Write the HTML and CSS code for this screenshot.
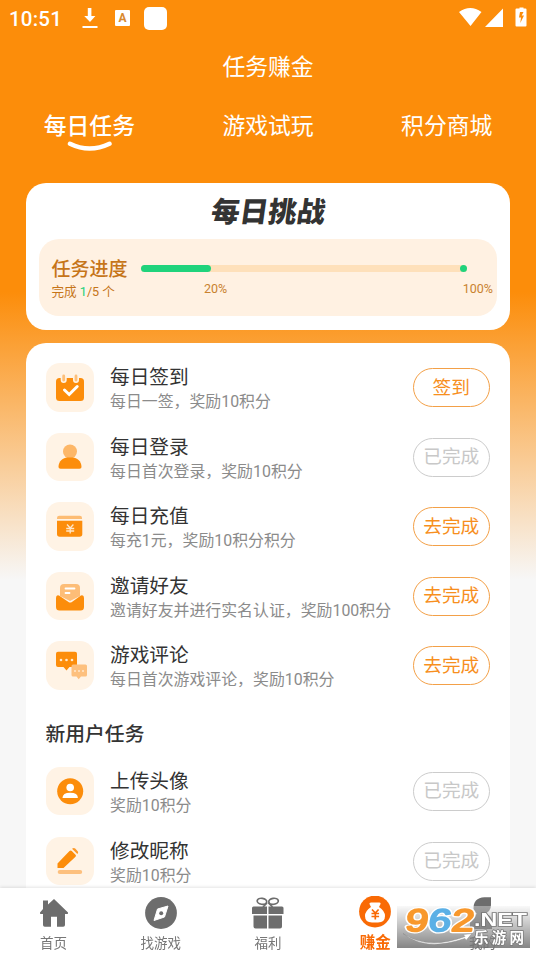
FILE: index.html
```html
<!DOCTYPE html>
<html lang="zh-CN">
<head>
<meta charset="utf-8">
<title>任务赚金</title>
<link rel="stylesheet" href="styles.css">
</head>
<body>
<div class="app">
  <header class="status">
    <span class="clock">10:51</span>
    <svg class="s-download" width="18" height="22" viewBox="0 0 18 22"><path d="M6.800 0h3.600v8h4L9 14 3.200 8h3.600zM1.500 18h15v2h-15z" fill="#fff"/></svg>
    <span class="s-lang">A</span>
    <span class="s-block"></span>
    <svg class="s-signals" width="68" height="22" viewBox="0 0 68 22" fill="#fff"><path d="M0 5Q11.300-3 22.500 5L11.500 19zM44 1.500V20H26z"/><path fill-rule="evenodd" d="M58.500 1.500h2V.5h4v1h2q1 0 1 1v16q0 1-1 1h-9q-1 0-1-1v-16q0-1 1-1zM61 5l-1 5.500h2L61.300 16l3.700-7.500h-2.300L64.500 5z"/></svg>
  </header>
  <h1 class="title">任务赚金</h1>
  <nav class="tabs">
    <div class="tab active">每日任务<svg class="smile" width="46" height="12" viewBox="0 0 46 12"><path d="M3 2.800Q22.500 12.300 42.500 2.800" fill="none" stroke="#fff" stroke-width="4.500" stroke-linecap="round"/></svg></div>
    <div class="tab">游戏试玩</div>
    <div class="tab">积分商城</div>
  </nav>

  <section class="card challenge">
    <h2>每日挑战</h2>
    <div class="progress">
      <div class="progress-label"><strong>任务进度</strong><small>完成 <em>1</em>/5 个</small></div>
      <div class="track-wrap">
        <div class="track"><i class="fill"></i><i class="dot"></i></div>
        <div class="marks"><span>20%</span><span>100%</span></div>
      </div>
    </div>
  </section>

  <main class="card tasks">
    <div class="row">
      <span class="icon"><svg width="48" height="48" viewBox="0 0 48 48"><rect x="10" y="15" width="28" height="23" rx="3.500" fill="#fc8d0b"/><g stroke-linecap="round"><path d="M17.700 13v4M30 13v4" stroke="#fff3e5" stroke-width="6"/><path d="M17.700 13v4M30 13v4" stroke="#fdbf7a" stroke-width="2.800"/></g><path d="m18.500 27 4.700 4.500 8-8" fill="none" stroke="#fff" stroke-width="3" stroke-linecap="round"/></svg></span>
      <div class="copy"><h3>每日签到</h3><p>每日一签，奖励10积分</p></div><button>签到</button>
    </div>
    <div class="row">
      <span class="icon"><svg width="48" height="48" viewBox="0 0 48 48"><circle cx="24" cy="18.500" r="7" fill="#fdb768"/><path d="M12.500 34c0-6 5-9.500 8.500-9.500h6c3.500 0 8.500 3.500 8.500 9.500q0 1.800-2 1.800h-19q-2 0-2-1.800z" fill="#fc8d0b"/></svg></span>
      <div class="copy"><h3>每日登录</h3><p>每日首次登录，奖励10积分</p></div><button class="done">已完成</button>
    </div>
    <div class="row">
      <span class="icon"><svg width="48" height="48" viewBox="0 0 48 48"><path d="M11 17v-1q0-2.200 2.200-2.200h20.600q2.200 0 2.200 2.200v1z" fill="#fdbc73"/><path d="M11 18.700h25.300V32q0 2.700-2.700 2.700H13.700q-2.700 0-2.700-2.700z" fill="#fc8d0b"/><path d="m21 22.500 3.200 3.500 3.200-3.500M20.200 26.500h8M20.200 29h8M24.200 25.500v6" fill="none" stroke="#ffe7ca" stroke-width="1.300"/></svg></span>
      <div class="copy"><h3>每日充值</h3><p>每充1元，奖励10积分积分</p></div><button>去完成</button>
    </div>
    <div class="row">
      <span class="icon"><svg width="48" height="48" viewBox="0 0 48 48"><path d="M14 24V16q0-4 4-4h12q4 0 4 4v8l-10 5z" fill="#fdbd77"/><path d="M19.500 16.500h9M19.500 21h4" stroke="#fff" stroke-width="1.800" stroke-linecap="round"/><path d="M10 26q0-3.500 3-2.500l9.500 6.500q1.700 1 3.400 0l9-6.500Q38 22.500 38 26v9q0 3.500-3.500 3.500h-21Q10 38.500 10 35z" fill="#fc8d0b"/></svg></span>
      <div class="copy"><h3>邀请好友</h3><p>邀请好友并进行实名认证，奖励100积分</p></div><button>去完成</button>
    </div>
    <div class="row">
      <span class="icon"><svg width="48" height="48" viewBox="0 0 48 48"><path d="M12 10.800h17q2 0 2 2V24q0 2-2 2h-5.500l-3 3.500-3-3.500H12q-2 0-2-2V12.800q0-2 2-2z" fill="#fc8d0b"/><path d="M27 23.500h12.500q1.500 0 1.500 1.500v9q0 1.500-1.500 1.500H35l-2.300 2.700-2.200-2.700H27q-1.500 0-1.500-1.500v-9q0-1.500 1.500-1.500z" fill="#fdc07e"/><g fill="#ffe9cf"><circle cx="15" cy="19" r="1.300"/><circle cx="20.500" cy="19" r="1.300"/><circle cx="26" cy="19" r="1.300"/><circle cx="29" cy="30" r="1"/><circle cx="33" cy="30" r="1"/><circle cx="37" cy="30" r="1"/></g></svg></span>
      <div class="copy"><h3>游戏评论</h3><p>每日首次游戏评论，奖励10积分</p></div><button>去完成</button>
    </div>
    <h2 class="section">新用户任务</h2>
    <div class="row">
      <span class="icon"><svg width="48" height="48" viewBox="0 0 48 48"><circle cx="24.200" cy="24.300" r="13" fill="#fc8d0b"/><circle cx="24.200" cy="20.500" r="3.800" fill="#fff"/><path d="M16.500 31q0-5.300 7.700-5.300t7.700 5.300z" fill="#fff"/></svg></span>
      <div class="copy"><h3>上传头像</h3><p>奖励10积分</p></div><button class="done">已完成</button>
    </div>
    <div class="row">
      <span class="icon"><svg width="48" height="48" viewBox="0 0 48 48"><path d="M11.500 31v-4.500L23.500 14q1.200-1 2.300 0l3.700 3.800q1 1 0 2L17.500 31z" fill="#fc8d0b"/><path d="m26 11.800 1-.6q1.200-.5 2.200.3l2.300 2.400q1 1 .5 2.200l-.7 1z" fill="#fc9a2b"/><rect x="11.700" y="33" width="24.500" height="4" rx="2" fill="#fdc07e"/></svg></span>
      <div class="copy"><h3>修改昵称</h3><p>奖励10积分</p></div><button class="done">已完成</button>
    </div>
  </main>

  <footer class="bottom">
    <div class="item"><svg width="34" height="34" viewBox="0 0 34 34"><path d="M3 16.500 6 13V4.500h5v4L17 3l14 13.500q.5 1.500-1 1.500h-2v11q0 1.800-1.800 1.800H20v-10h-6v10H7.800Q6 30.800 6 29V18H4q-1.500 0-1-1.500z" fill="#6d6d6d"/></svg><span>首页</span></div>
    <div class="item"><svg width="34" height="34" viewBox="0 0 34 34"><circle cx="17" cy="17" r="15.900" fill="#6d6d6d"/><path d="m24 10-3.500 11L10 24.500 13.500 13z" fill="#fff" stroke="#fff" stroke-linejoin="round"/><circle cx="17.200" cy="17.200" r="2" fill="#6d6d6d"/></svg><span>找游戏</span></div>
    <div class="item"><svg width="34" height="34" viewBox="0 0 34 34"><g fill="none" stroke="#6d6d6d" stroke-width="1.700"><ellipse cx="11" cy="5.300" rx="4.800" ry="3" transform="rotate(9 11 5)"/><ellipse cx="22.500" cy="5.300" rx="4.800" ry="3" transform="rotate(-9 22.500 5)"/><path d="m16 7-4 4M17.500 7l4 4"/></g><g fill="#6d6d6d"><path d="M2.500 10.500H16V18H1v-6q0-1.500 1.500-1.500zM17.500 10.500H31q1.500 0 1.500 1.500v6h-15zM2.500 19.500H16v13H4.500q-2 0-2-2zM17.500 19.500H31v11q0 2-2 2H17.500z"/></g></svg><span>福利</span></div>
    <div class="item current"><svg width="34" height="34" viewBox="0 0 34 34"><circle cx="17" cy="15.500" r="15.900" fill="#f96a05"/><path d="M13 6.500h8.500q1.500 0 1 1.500l-1.500 3q6 4 6 9 0 6.500-7 6.500h-6q-7 0-7-6.500 0-5 6-9L11.500 8q-.5-1.500 1.500-1.500z" fill="#fff"/><path d="m14 13.500 3.300 3.500 3.300-3.500M13.500 17.500h7.600M13.500 20.500h7.600M17.300 17v6.500" fill="none" stroke="#f96a05" stroke-width="1.700"/></svg><span>赚金</span></div>
    <div class="item"><svg width="34" height="34" viewBox="0 0 34 34"><path d="M8.500 13Q8 2 19.500 1.200H26V9q0 7-7 8.500 8 1 8 8V33H5v-7q0-7 7-8-3-2-3.500-5z" fill="#6d6d6d"/></svg><span>我的</span></div>
    <div class="watermark">
      <svg width="133" height="42" viewBox="0 0 133 42">
        <g transform="skewX(-8)" font-family="Liberation Sans" font-size="31" stroke-linejoin="round"><g fill="#fff" stroke="#fff" stroke-width="4.500"><text transform="translate(11 25) scale(1.300 1)">9</text><text transform="translate(34 25) scale(1.300 1)">6</text><text transform="translate(57 25) scale(1.300 1)">2</text></g><g stroke-width="2"><text transform="translate(11 25) scale(1.300 1)" fill="#f8982c" stroke="#f8982c">9</text><text transform="translate(34 25) scale(1.300 1)" fill="#5bb0e6" stroke="#5bb0e6">6</text><text transform="translate(57 25) scale(1.300 1)" fill="#f8982c" stroke="#f8982c">2</text></g></g>
        <text x="77" y="19.500" textLength="53" lengthAdjust="spacingAndGlyphs" font-family="Liberation Sans" font-weight="bold" font-size="18" fill="#fff" stroke="#777" stroke-width="1.600" paint-order="stroke">.NET</text>
        <path d="M6 27.500q25 17 62 3l-2-2 9-1-6 7-1-2Q28 46 6 27.500z" fill="#fff" stroke="#888" stroke-width=".5"/>
        <text x="77" y="37" textLength="50" font-family="Noto Sans CJK SC" font-weight="bold" font-size="14.500" fill="#fff" stroke="#777" stroke-width="1.400" paint-order="stroke">乐游网</text>
      </svg>
    </div>
  </footer>
</div>
</body>
</html>
```

FILE: styles.css
```css
* { box-sizing: border-box; }
body, h1, h2, h3, p { margin: 0; }
body { font-family: Roboto, "Noto Sans CJK SC", sans-serif; color: #333; overflow: hidden; }
.app {
  height: 954px;
  display: flex;
  flex-direction: column;
  overflow: hidden;
  background: linear-gradient(#fc8d0a 0, #fc8d0a 292px, #f7f7f7 580px);
}
.status { height: 36px; flex: none; display: flex; align-items: flex-start; padding: 7px 9px 0; color: #fff; }
.clock { width: 62px; font-size: 20.5px; line-height: 24px; font-weight: 500; letter-spacing: .2px; }
.s-download { margin: 1px 0 0 10px; }
.s-lang { width: 15px; height: 16px; margin: 3px 0 0 16px; background: #fff; border-radius: 1px; color: #d88930; font-size: 12px; line-height: 16px; font-weight: 700; text-align: center; }
.s-block { width: 23px; height: 23px; margin-left: 14px; background: #fff; border-radius: 5px; }
.s-signals { margin-left: auto; }
.title { height: 62px; flex: none; color: #fff; font-size: 22.8px; font-weight: 400; line-height: 63px; text-align: center; }
.tabs { display: flex; height: 85px; flex: none; color: #fff; font-size: 22.8px; line-height: 58px; text-align: center; }
.tab { flex: 1; position: relative; }
.tab.active { font-weight: 500; }
.smile { position: absolute; left: 67px; top: 43px; }
.card { background: #fff; flex: none; margin: 0 26px; border-radius: 20px; }
.challenge { height: 147px; padding: 8px 13px 0; }
.challenge h2 { height: 47.5px; font-size: 28.5px; line-height: 43px; font-weight: 900; text-align: center; transform: skewX(-8deg); }
.progress { height: 77.5px; display: flex; padding: 16px 4px 0 12.5px; background: #fff1e2; border-radius: 20px; color: #c67519; }
.progress-label { width: 89.5px; }
.progress-label strong { display: block; font-size: 19px; line-height: 29px; font-weight: 500; }
.progress-label small { display: block; font-size: 12.6px; line-height: 16px; }
.progress-label em { color: #25d17c; font-style: normal; }
.track-wrap { flex: 1; padding-top: 10.5px; }
.track { display: flex; justify-content: space-between; width: 326px; height: 7px; border-radius: 4px; background: #fee0ba; }
.fill { width: 70px; border-radius: 4px; background: #20d37c; }
.dot { width: 7px; border-radius: 50%; background: #20d37c; }
.marks { display: flex; justify-content: space-between; padding: 8px 0 0 63px; font-size: 12.5px; line-height: 17px; color: #c9822f; }
.tasks { margin-top: 13px; padding: 20px 20px 0 19.5px; height: 620px; }
.row { height: 69.6px; display: flex; align-items: flex-start; }
.icon { width: 48.5px; height: 48.5px; border-radius: 14px; background: #fff3e5; flex: none; }
.icon svg { display: block; }
.copy { flex: 1; margin-left: 16px; white-space: nowrap; }
.copy h3 { font-size: 19.7px; line-height: 30px; font-weight: 400; }
.copy p { font-size: 15.9px; line-height: 18px; color: #8b8b8b; }
.row button { flex: none; width: 77.5px; height: 39px; margin-top: 5px; padding: 1px 0 0; border: 1.5px solid #f3a047; border-radius: 20px; background: #fff; color: #f78f1e; font: 18.7px/35px Roboto, "Noto Sans CJK SC", sans-serif; }
.row button.done { color: #c8c8c8; border-color: #ccc; }
.section { height: 56px; font-size: 19.8px; line-height: 47px; font-weight: 500; }
.bottom { position: fixed; left: 0; right: 0; top: 888px; height: 66px; display: flex; padding-top: 8px; background: #fff; box-shadow: 0 -1px 3px #0000001c; }
.item { flex: 1; display: flex; flex-direction: column; align-items: center; font-size: 13.5px; line-height: 20px; color: #777; }
.item span { margin-top: 3px; }
.item.current { color: #f96a05; font-size: 15.5px; font-weight: 700; }
.watermark { position: absolute; left: 397px; top: 18px; width: 133px; height: 42px; background: linear-gradient(#f0f0f066, #707070d9); }
.watermark svg { display: block; }
```
